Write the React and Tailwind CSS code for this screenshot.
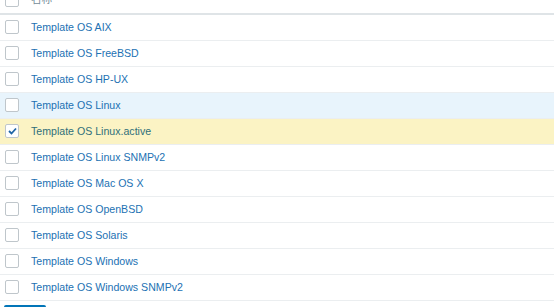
import React from "react";

const rows = [
  { name: "Template OS AIX" },
  { name: "Template OS FreeBSD" },
  { name: "Template OS HP-UX" },
  { name: "Template OS Linux", hover: true },
  { name: "Template OS Linux.active", checked: true },
  { name: "Template OS Linux SNMPv2" },
  { name: "Template OS Mac OS X" },
  { name: "Template OS OpenBSD" },
  { name: "Template OS Solaris" },
  { name: "Template OS Windows" },
  { name: "Template OS Windows SNMPv2" },
];

function Box({ checked }) {
  return (
    <span className="w-[14px] h-[14px] shrink-0 rounded-[2px] border border-[#bfc6cb] bg-white flex items-center justify-center">
      {checked && (
        <svg width="9" height="8" viewBox="0 0 9 8">
          <path d="M1 4 L3.5 6.5 L8 1.5" fill="none" stroke="#1f65a6" strokeWidth="1.8" />
        </svg>
      )}
    </span>
  );
}

export default function App() {
  return (
    <div
      className="w-[554px] h-[307px] overflow-hidden bg-white text-[10.6px]"
      style={{ fontFamily: '"Liberation Sans", Arial, "Noto Sans CJK SC", sans-serif' }}
    >
      <div className="-mt-[13px] h-[28px] flex items-center pl-[5px] border-b-2 border-[#dfe4e7]">
        <Box />
        <span className="ml-[12px] text-[#768d99]">名称</span>
      </div>
      {rows.map((r) => (
        <div
          key={r.name}
          className={
            "h-[26px] flex items-center pl-[5px] border-b border-[#ebeef0] pb-[2px] " +
            (r.checked ? "bg-[#fbf3c4]" : r.hover ? "bg-[#e8f4fc]" : "bg-white")
          }
        >
          <Box checked={r.checked} />
          <span className={"ml-[12px] mt-[2px] " + (r.checked ? "text-[#2f6f7a]" : "text-[#2271b3]")}>{r.name}</span>
        </div>
      ))}
      <div className="pt-[4px] pl-[4px]">
        <div className="w-[42px] h-[20px] rounded-[2px] bg-[#0275b8]" />
      </div>
    </div>
  );
}
